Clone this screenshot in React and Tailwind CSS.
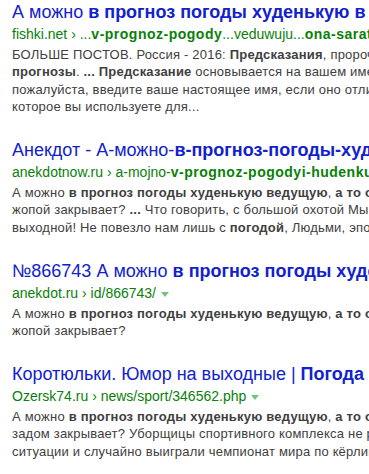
import React from "react";

const B = ({ children }) => <b className="font-bold">{children}</b>;
// bold parts of the green url line render a bit wider in the shot
const UB = ({ children }) => <b className="font-bold tracking-[0.5px]">{children}</b>;

const Arrow = () => (
  <svg className="inline-block ml-[5px] align-middle" width="8" height="5" viewBox="0 0 8 5">
    <path d="M0 0h8L4 5z" fill="#7cbf7c" />
  </svg>
);

const results = [
  {
    title: (
      <>
        А можно <B>в прогноз погоды худенькую в</B>
      </>
    ),
    url: (
      <>
        fishki.net › ...<UB>v-prognoz-pogody</UB>...veduwuju...<UB>ona-saratove</UB>
      </>
    ),
    lines: [
      <>
        БОЛЬШЕ ПОСТОВ. Россия - 2016: <B>Предсказания</B>, пророчества
      </>,
      <>
        <B>прогнозы</B>. <B>...</B> <B>Предсказание</B> основывается на вашем имени
      </>,
      <>пожалуйста, введите ваше настоящее имя, если оно отличается</>,
      <>которое вы используете для...</>,
    ],
  },
  {
    title: (
      <>
        Анекдот - А-можно-<B>в-прогноз-погоды-худенькую</B>
      </>
    ),
    url: (
      <>
        anekdotnow.ru › a-mojno-<UB>v-prognoz-pogodyi-hudenkuyu</UB>
      </>
    ),
    lines: [
      <>
        А можно <B>в прогноз погоды худенькую ведущую</B>, <B>а то она</B>
      </>,
      <>
        жопой закрывает? <B>...</B> Что говорить, с большой охотой Мы по
      </>,
      <>
        выходной! Не повезло нам лишь с <B>погодой</B>, Людьми, эпохой
      </>,
    ],
  },
  {
    title: (
      <>
        №866743 А можно <B>в прогноз погоды худенькую</B>
      </>
    ),
    url: (
      <>
        anekdot.ru › id/866743/
        <Arrow />
      </>
    ),
    lines: [
      <>
        А можно <B>в прогноз погоды худенькую ведущую</B>, <B>а то она</B>
      </>,
      <>жопой закрывает?</>,
    ],
  },
  {
    title: (
      <>
        Коротюльки. Юмор на выходные | <B>Погода</B>
      </>
    ),
    url: (
      <>
        Ozersk74.ru › news/sport/346562.php
        <Arrow />
      </>
    ),
    lines: [
      <>
        А можно <B>в прогноз погоды худенькую ведущую</B>, <B>а то она</B>
      </>,
      <>задом закрывает? Уборщицы спортивного комплекса не растерялись</>,
      <>ситуации и случайно выиграли чемпионат мира по кёрлингу</>,
    ],
  },
];

export default function App() {
  return (
    <div
      className="w-[369px] h-[474px] overflow-hidden bg-white"
      style={{ fontFamily: '"Liberation Sans", Arial, sans-serif' }}
    >
      <div className="w-[640px] pl-[12px]">
        {results.map((r, i) => (
          <div key={i} className="mb-[22.5px]">
            <div className="text-[18px] leading-[24px] text-[#1122cc] whitespace-nowrap">{r.title}</div>
            <div className="text-[14px] leading-[20px] text-[#0a800a] whitespace-nowrap">{r.url}</div>
            <div className="mt-[1.7px] text-[13px] leading-[17.5px] tracking-[0.2px] text-[#404040] whitespace-nowrap">
              {r.lines.map((l, j) => (
                <div key={j}>{l}</div>
              ))}
            </div>
          </div>
        ))}
      </div>
    </div>
  );
}
